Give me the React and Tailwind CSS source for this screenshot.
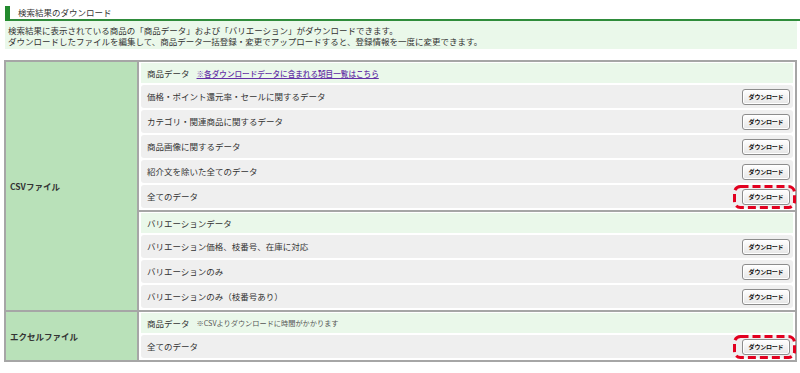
import React from 'react';

const csvGroups = [
  {
    title: '商品データ',
    link: '※各ダウンロードデータに含まれる項目一覧はこちら',
    rows: [
      { label: '価格・ポイント還元率・セールに関するデータ' },
      { label: 'カテゴリ・関連商品に関するデータ' },
      { label: '商品画像に関するデータ' },
      { label: '紹介文を除いた全てのデータ' },
      { label: '全てのデータ', marked: true },
    ],
  },
  {
    title: 'バリエーションデータ',
    rows: [
      { label: 'バリエーション価格、枝番号、在庫に対応' },
      { label: 'バリエーションのみ' },
      { label: 'バリエーションのみ（枝番号あり）' },
    ],
  },
];

const excelGroups = [
  {
    title: '商品データ',
    note: '※CSVよりダウンロードに時間がかかります',
    rows: [{ label: '全てのデータ', marked: true }],
  },
];

function DownloadButton({ marked }) {
  return (
    <div className="relative">
      <button className="flex h-[16px] w-[48px] items-center justify-center rounded-[3px] border border-[#8c8c8c] bg-gradient-to-b from-white to-[#e6e6e6] text-[6px] font-bold tracking-[-0.2px] text-[#111] shadow-[inset_0_0_0_1px_#fff]">
        ダウンロード
      </button>
      {marked && (
        <svg
          className="pointer-events-none absolute left-[-9px] top-[-4px]"
          width="63"
          height="24"
          viewBox="0 0 63 24"
        >
          <rect
            x="1.5"
            y="1.5"
            width="60"
            height="21"
            rx="6"
            fill="none"
            stroke="#e2001f"
            strokeWidth="3"
            strokeDasharray="8 4"
          />
        </svg>
      )}
    </div>
  );
}

function Group({ group, last }) {
  return (
    <div
      className={`flex flex-col gap-[2px] px-[2px] pt-[1px] pb-[2px] ${
        last ? '' : 'border-b-2 border-[#a6a6a6]'
      }`}
    >
      <div className="flex h-[20px] items-center gap-[7px] bg-[#eaf8ea] pl-[6px]">
        <span>{group.title}</span>
        {group.link && (
          <a href="#" className="text-[7.6px] font-medium text-[#6430a6] underline">
            {group.link}
          </a>
        )}
        {group.note && <span className="text-[7.2px] text-[#555]">{group.note}</span>}
      </div>
      {group.rows.map((row) => (
        <div
          key={row.label}
          className="flex h-[23px] items-center justify-between rounded-[3px] bg-[#efefef] pl-[6px] pr-[3px]"
        >
          <span>{row.label}</span>
          <DownloadButton marked={row.marked} />
        </div>
      ))}
    </div>
  );
}

function Section({ name, groups, last }) {
  return (
    <div className={`flex ${last ? '' : 'border-b-2 border-[#a6a6a6]'}`}>
      <div className="flex w-[133px] shrink-0 items-center border-r-2 border-[#a6a6a6] bg-[#b9e1b9] pl-[4px] font-semibold">
        {name}
      </div>
      <div className="flex flex-1 flex-col">
        {groups.map((g, i) => (
          <Group key={g.title + i} group={g} last={i === groups.length - 1} />
        ))}
      </div>
    </div>
  );
}

export default function App() {
  return (
    <div className="h-[373px] w-[800px] bg-white pt-[5px] font-['Noto_Sans_CJK_JP','Noto_Sans',sans-serif] text-[8.5px] leading-[11px] text-[#333]">
      {/* title */}
      <div className="ml-[5px] flex h-[16px] items-center border-b-2 border-[#2f8c3b]">
        <div className="mt-[1px] h-[15px] w-[5px] self-start bg-[#238a2e]" />
        <span className="ml-[8px]">検索結果のダウンロード</span>
      </div>

      <div className="ml-[5px] mr-[3px] bg-[#eaf8ea] pl-[3px] pt-[4px] pb-[2px]">
        <p>検索結果に表示されている商品の「商品データ」および「バリエーション」がダウンロードできます。</p>
        <p>ダウンロードしたファイルを編集して、商品データ一括登録・変更でアップロードすると、登録情報を一度に変更できます。</p>
      </div>

      {/* download table */}
      <div className="ml-[4px] mr-[3px] mt-[11px] border-2 border-[#a6a6a6]">
        <Section name="CSVファイル" groups={csvGroups} />
        <Section name="エクセルファイル" groups={excelGroups} last />
      </div>
    </div>
  );
}
